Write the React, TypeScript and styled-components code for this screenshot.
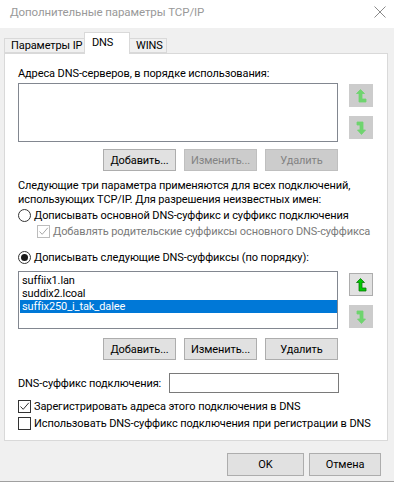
import styled, { createGlobalStyle } from 'styled-components';

const GlobalStyle = createGlobalStyle`
  body {
    margin: 0;
    background: #f0f0f0;
    font-family: Roboto, "Segoe UI", sans-serif;
    font-size: 11px;
    letter-spacing: -0.1px;
    color: #000;
  }
  * {
    box-sizing: border-box;
  }
`;

const Window = styled.div`
  width: 394px;
  height: 482px;
  display: flex;
  flex-direction: column;
  background: #f0f0f0;
  border-bottom: 1px solid #a0a0a0;
  overflow: hidden;
`;

const TitleBar = styled.div`
  height: 28px;
  padding: 0 8px 4px 10px;
  display: flex;
  align-items: center;
  justify-content: space-between;
  background: #fff;
  color: #999;
  font-size: 11.5px;
`;

const Body = styled.div`
  padding: 4px 6px 0 4px;
  display: flex;
  flex-direction: column;
`;

const TabStrip = styled.div`
  height: 21px;
  padding-left: 1px;
  display: flex;
  align-items: flex-end;
  position: relative;
  z-index: 1;
`;

const Tab = styled.div<{ $active?: boolean; $w: number }>`
  width: ${({ $w }) => $w}px;
  height: ${({ $active }) => ($active ? 22 : 15)}px;
  margin-bottom: ${({ $active }) => ($active ? -1 : 0)}px;
  padding: ${({ $active }) => ($active ? '3px 0 0 7px' : '0 0 0 6px')};
  border: 1px solid #d9d9d9;
  border-bottom: ${({ $active }) => ($active ? 'none' : '1px solid #d9d9d9')};
  margin-left: -1px;
  background: ${({ $active }) => ($active ? '#fff' : '#f0f0f0')};
  line-height: 13px;
  white-space: nowrap;
`;

const Panel = styled.div`
  width: 384px;
  height: 388px;
  padding: 12px 0 0 13px;
  background: #fff;
  border: 1px solid #d9d9d9;
  display: flex;
  flex-direction: column;
`;

const Label = styled.div`
  line-height: 15px;
  white-space: nowrap;
`;

const ListRow = styled.div<{ $mt: number }>`
  margin-top: ${({ $mt }) => $mt}px;
  display: flex;
`;

const ListBox = styled.div<{ $h: number }>`
  width: 320px;
  height: ${({ $h }) => $h}px;
  border: 1px solid #828790;
  padding: 2px 0 0 1px;
  background: #fff;
`;

const ListItem = styled.div<{ $selected?: boolean }>`
  height: 13px;
  line-height: 13px;
  padding-left: 2px;
  background: ${({ $selected }) => ($selected ? '#0078d7' : 'transparent')};
  color: ${({ $selected }) => ($selected ? '#fff' : '#000')};
`;

const ArrowColumn = styled.div<{ $mt: number }>`
  margin: ${({ $mt }) => $mt}px 0 0 11px;
  display: flex;
  flex-direction: column;
  gap: 9px;
`;

const ArrowButton = styled.div<{ $disabled?: boolean }>`
  width: 24px;
  height: 23px;
  display: flex;
  align-items: center;
  justify-content: center;
  background: ${({ $disabled }) => ($disabled ? '#cccccc' : '#e1e1e1')};
  border: 1px solid ${({ $disabled }) => ($disabled ? '#cccccc' : '#adadad')};
`;

const ButtonRow = styled.div<{ $mt: number }>`
  width: 320px;
  margin-top: ${({ $mt }) => $mt}px;
  display: flex;
  justify-content: flex-end;
  gap: 8px;
`;

const Button = styled.div<{ $disabled?: boolean; $w?: number }>`
  width: ${({ $w }) => $w ?? 73}px;
  height: 22px;
  display: flex;
  align-items: center;
  justify-content: center;
  background: ${({ $disabled }) => ($disabled ? '#cccccc' : '#e1e1e1')};
  border: 1px solid ${({ $disabled }) => ($disabled ? '#bfbfbf' : '#adadad')};
  color: ${({ $disabled }) => ($disabled ? '#838383' : '#000')};
  white-space: nowrap;
`;

const Paragraph = styled.div`
  margin-top: 8px;
  line-height: 14px;
  white-space: nowrap;
`;

const OptionRow = styled.div<{ $mt?: number; $indent?: number; $disabled?: boolean }>`
  margin: ${({ $mt }) => $mt ?? 0}px 0 0 ${({ $indent }) => $indent ?? 0}px;
  height: 16px;
  display: flex;
  align-items: center;
  gap: 3px;
  color: ${({ $disabled }) => ($disabled ? '#7a7a7a' : '#000')};
  white-space: nowrap;
`;

const Radio = styled.span<{ $checked?: boolean }>`
  width: 13px;
  height: 13px;
  flex: none;
  border-radius: 50%;
  border: 1px solid #333;
  background: #fff;
  display: flex;
  align-items: center;
  justify-content: center;

  &::after {
    content: '';
    width: 7px;
    height: 7px;
    border-radius: 50%;
    background: ${({ $checked }) => ($checked ? '#1a1a1a' : 'transparent')};
  }
`;

const Box = styled.span<{ $disabled?: boolean }>`
  width: 13px;
  height: 13px;
  flex: none;
  border: 1px solid ${({ $disabled }) => ($disabled ? '#bcbcbc' : '#333')};
  background: #fff;
  display: flex;
  align-items: center;
  justify-content: center;
`;

const FieldRow = styled.div`
  margin-top: 13px;
  display: flex;
  align-items: center;
`;

const FieldLabel = styled.span`
  width: 151px;
  white-space: nowrap;
`;

const TextInput = styled.div`
  width: 170px;
  height: 20px;
  border: 1px solid #7a7a7a;
  background: #fff;
`;

const Footer = styled.div`
  padding: 12px 7px 0 0;
  display: flex;
  justify-content: flex-end;
  gap: 5px;
`;

const FooterButton = styled(Button)`
  height: 23px;
`;

const CloseIcon = () => (
  <svg width="12" height="12" viewBox="0 0 12 12">
    <path d="M0.5 0.5L11.5 11.5M11.5 0.5L0.5 11.5" stroke="#8a8a8a" strokeWidth="1" />
  </svg>
);

const ArrowUp = ({ disabled }: { disabled?: boolean }) => (
  <svg width="11" height="14" viewBox="0 0 11 14">
    <path
      d="M4.5 0.5L8.5 4.5H6V10H10V13H3V4.5H0.5Z"
      fill={disabled ? '#6fd46f' : '#00c800'}
      stroke={disabled ? '#6fd46f' : '#0a7a0a'}
      strokeWidth="0.8"
      strokeLinejoin="round"
    />
  </svg>
);

const ArrowDown = ({ disabled }: { disabled?: boolean }) => (
  <svg width="11" height="14" viewBox="0 0 11 14">
    <path
      d="M1 1H7V9H9.5L5.5 13.5L1.5 9H4V4H1Z"
      fill={disabled ? '#6fd46f' : '#00c800'}
      stroke={disabled ? '#6fd46f' : '#0a7a0a'}
      strokeWidth="0.8"
      strokeLinejoin="round"
    />
  </svg>
);

const CheckMark = ({ color }: { color: string }) => (
  <svg width="11" height="11" viewBox="0 0 11 11">
    <path d="M1.5 5.5L4.2 8.3L9.8 1.8" fill="none" stroke={color} strokeWidth="1" />
  </svg>
);

const suffixes = ['suffiix1.lan', 'suddix2.lcoal', 'suffix250_i_tak_dalee'];

export default function App() {
  return (
    <>
      <GlobalStyle />
      <Window>
        <TitleBar>
          <span>Дополнительные параметры TCP/IP</span>
          <CloseIcon />
        </TitleBar>
        <Body>
          <TabStrip>
            <Tab $w={81}>Параметры IP</Tab>
            <Tab $w={46} $active>DNS</Tab>
            <Tab $w={38}>WINS</Tab>
          </TabStrip>
          <Panel>
            <Label>Адреса DNS-серверов, в порядке использования:</Label>
            <ListRow $mt={2}>
              <ListBox $h={59} />
              <ArrowColumn $mt={1}>
                <ArrowButton $disabled>
                  <ArrowUp disabled />
                </ArrowButton>
                <ArrowButton $disabled>
                  <ArrowDown disabled />
                </ArrowButton>
              </ArrowColumn>
            </ListRow>
            <ButtonRow $mt={7}>
              <Button>Добавить...</Button>
              <Button $disabled>Изменить...</Button>
              <Button $disabled>Удалить</Button>
            </ButtonRow>

            <Paragraph>
              Следующие три параметра применяются для всех подключений,
              <br />
              использующих TCP/IP. Для разрешения неизвестных имен:
            </Paragraph>
            <OptionRow>
              <Radio />
              Дописывать основной DNS-суффикс и суффикс подключения
            </OptionRow>
            <OptionRow $indent={19} $disabled>
              <Box $disabled>
                <CheckMark color="#a8a8a8" />
              </Box>
              Добавлять родительские суффиксы основного DNS-суффикса
            </OptionRow>
            <OptionRow $mt={10}>
              <Radio $checked />
              Дописывать следующие DNS-суффиксы (по порядку):
            </OptionRow>

            <ListRow $mt={6}>
              <ListBox $h={58}>
                {suffixes.map((s, i) => (
                  <ListItem key={s} $selected={i === 2}>
                    {s}
                  </ListItem>
                ))}
              </ListBox>
              <ArrowColumn $mt={2}>
                <ArrowButton>
                  <ArrowUp />
                </ArrowButton>
                <ArrowButton $disabled>
                  <ArrowDown disabled />
                </ArrowButton>
              </ArrowColumn>
            </ListRow>
            <ButtonRow $mt={9}>
              <Button>Добавить...</Button>
              <Button>Изменить...</Button>
              <Button>Удалить</Button>
            </ButtonRow>

            <FieldRow>
              <FieldLabel>DNS-суффикс подключения:</FieldLabel>
              <TextInput />
            </FieldRow>
            <OptionRow $mt={5}>
              <Box>
                <CheckMark color="#333" />
              </Box>
              Зарегистрировать адреса этого подключения в DNS
            </OptionRow>
            <OptionRow $mt={1}>
              <Box />
              Использовать DNS-суффикс подключения при регистрации в DNS
            </OptionRow>
          </Panel>
          <Footer>
            <FooterButton $w={77}>OK</FooterButton>
            <FooterButton $w={72}>Отмена</FooterButton>
          </Footer>
        </Body>
      </Window>
    </>
  );
}
